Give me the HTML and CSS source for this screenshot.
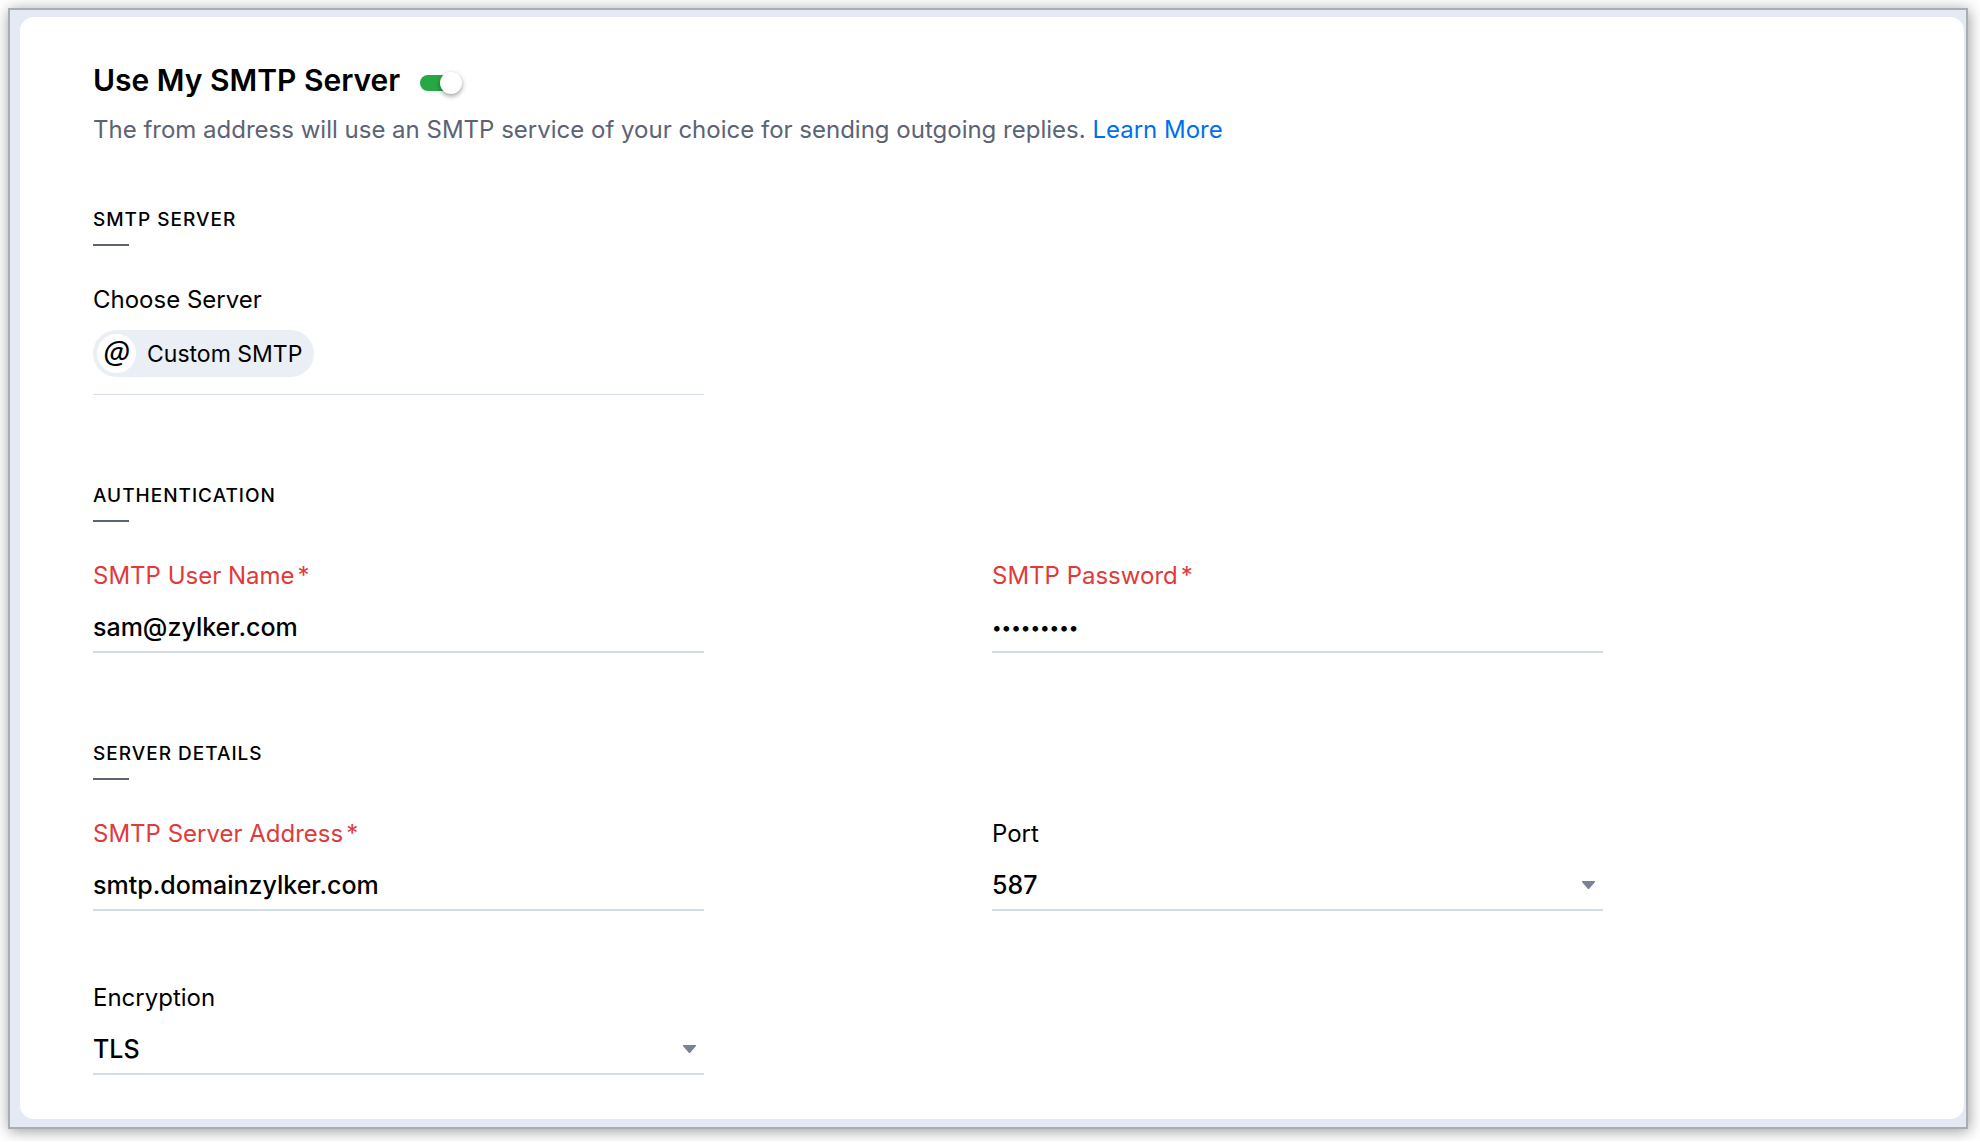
FILE: index.html
```html
<!DOCTYPE html>
<html lang="en">
<head>
  <meta charset="UTF-8" />
  <meta name="viewport" content="width=device-width, initial-scale=1.0"/>
  <title>Use My SMTP Server</title>
  <link rel="stylesheet" href="styles.css">
</head>
<body>
  <main class="frame">
    <form class="panel">
      <div class="title-row">
        <h1><label for="use-smtp">Use My SMTP Server</label></h1>
        <input type="checkbox" class="toggle" id="use-smtp" name="use_smtp" role="switch" checked />
      </div>
      <p class="intro">The from address will use an SMTP service of your choice for sending outgoing replies. <a href="#">Learn More</a></p>

      <section>
        <h2>SMTP Server</h2>
        <div class="fields">
          <div class="field field-chip">
            <label for="server">Choose Server</label>
            <button type="button" class="chip" id="server"><span class="chip-icon">@</span>Custom SMTP</button>
          </div>
        </div>
      </section>

      <section>
        <h2>Authentication</h2>
        <div class="fields">
          <div class="field required">
            <label for="username">SMTP User Name<span class="star">*</span></label>
            <input type="text" id="username" name="username" value="sam@zylker.com" required />
          </div>
          <div class="field required">
            <label for="password">SMTP Password<span class="star">*</span></label>
            <input type="password" id="password" name="password" value="zylker123" required />
          </div>
        </div>
      </section>

      <section>
        <h2>Server Details</h2>
        <div class="fields">
          <div class="field required">
            <label for="address">SMTP Server Address<span class="star">*</span></label>
            <input type="text" id="address" name="address" value="smtp.domainzylker.com" required />
          </div>
          <div class="field">
            <label for="port">Port</label>
            <div class="select">
              <select id="port" name="port">
                <option>587</option>
                <option>465</option>
                <option>25</option>
              </select>
              <svg width="13" height="8" viewBox="0 0 13 8" aria-hidden="true"><path d="M0 0h13v1L7 8H6L0 1z"/></svg>
            </div>
          </div>
          <div class="field">
            <label for="encryption">Encryption</label>
            <div class="select">
              <select id="encryption" name="encryption">
                <option>TLS</option>
                <option>SSL</option>
              </select>
              <svg width="13" height="8" viewBox="0 0 13 8" aria-hidden="true"><path d="M0 0h13v1L7 8H6L0 1z"/></svg>
            </div>
          </div>
        </div>
      </section>
    </form>
  </main>
</body>
</html>
```
FILE: styles.css
```css
* {
  box-sizing: border-box;
}

body {
  margin: 0;
  padding: 8px 12px 12px 8px;
  font-family: Inter, 'Liberation Sans', sans-serif;
  font-size: 24px;
  line-height: 32px;
  background-color: #fff;
  color: #000;
}

.frame {
  padding: 7px 2px 8px 10px;
  border: 2px solid #a9aeb3;
  background-color: #e4e9f3;
  box-shadow: 1px 2px 14px rgba(0, 0, 0, 0.4);
}

.panel {
  padding: 43px 73px 44px;
  border-radius: 14px;
  background-color: #fff;
}

.title-row {
  display: flex;
  align-items: center;
  gap: 20px;
}

h1 {
  margin: 0;
  font-size: 30px;
  font-weight: 600;
  line-height: 40px;
}

.toggle {
  appearance: none;
  display: flex;
  align-items: center;
  justify-content: flex-end;
  width: 42px;
  height: 16px;
  margin: 5px 0 0;
  border-radius: 8px;
  background: linear-gradient(to right, #28a745 32px, transparent 32px);
  cursor: pointer;
}

.toggle::before {
  content: '';
  flex: none;
  width: 22px;
  height: 22px;
  border-radius: 50%;
  background-color: #fff;
  box-shadow: 0 2px 5px rgba(0, 0, 0, 0.4);
}

.toggle:not(:checked) {
  justify-content: flex-start;
  background: #b5bcc6;
}

.intro {
  margin: 14px 0 62px;
  color: #5b6374;
}

a {
  color: #006fee;
  text-decoration: none;
}

section + section {
  margin-top: 89px;
}

h2 {
  margin: 0 0 38px;
  font-size: 19px;
  font-weight: 500;
  line-height: 24px;
  letter-spacing: 1px;
  text-transform: uppercase;
}

h2::after {
  content: '';
  display: block;
  width: 36px;
  height: 2px;
  margin-top: 12px;
  background-color: #5b6374;
}

.fields {
  display: grid;
  grid-template-columns: 1fr 1fr;
  row-gap: 71px;
}

.field {
  display: flex;
  flex-direction: column;
  gap: 19px;
  width: 68%;
}

.required label {
  color: #e03a3a;
}

.star {
  margin-left: 3px;
}

.field input,
.field select {
  display: block;
  width: 100%;
  height: 42px;
  padding: 0 0 8px;
  border: none;
  border-bottom: 2px solid #d3dce8;
  border-radius: 0;
  outline: none;
  background: none;
  color: #000;
  font: inherit;
  font-size: 25px;
  font-weight: 500;
}

.field input[type="password"] {
  font-size: 18px;
}

.field select {
  appearance: none;
  cursor: pointer;
}

.select {
  display: grid;
  align-items: center;
}

.select select,
.select svg {
  grid-area: 1 / 1;
}

.select svg {
  justify-self: end;
  margin: 0 8px 10px 0;
  fill: #7a8294;
  pointer-events: none;
}

.field-chip {
  gap: 14px;
  align-items: flex-start;
  padding-bottom: 17px;
  border-bottom: 1px solid #d3dce8;
}

.chip {
  display: flex;
  align-items: center;
  gap: 11px;
  height: 47px;
  padding: 4px 12px 4px 4px;
  border: none;
  border-radius: 24px;
  background-color: #e9eff4;
  color: #000;
  font: inherit;
  font-size: 23px;
  cursor: pointer;
}

.chip-icon {
  width: 39px;
  height: 39px;
  border-radius: 50%;
  background-color: #fff;
  font-family: 'Noto Sans', sans-serif;
  font-size: 31px;
  font-style: italic;
  line-height: 34px;
  text-align: center;
}
```
